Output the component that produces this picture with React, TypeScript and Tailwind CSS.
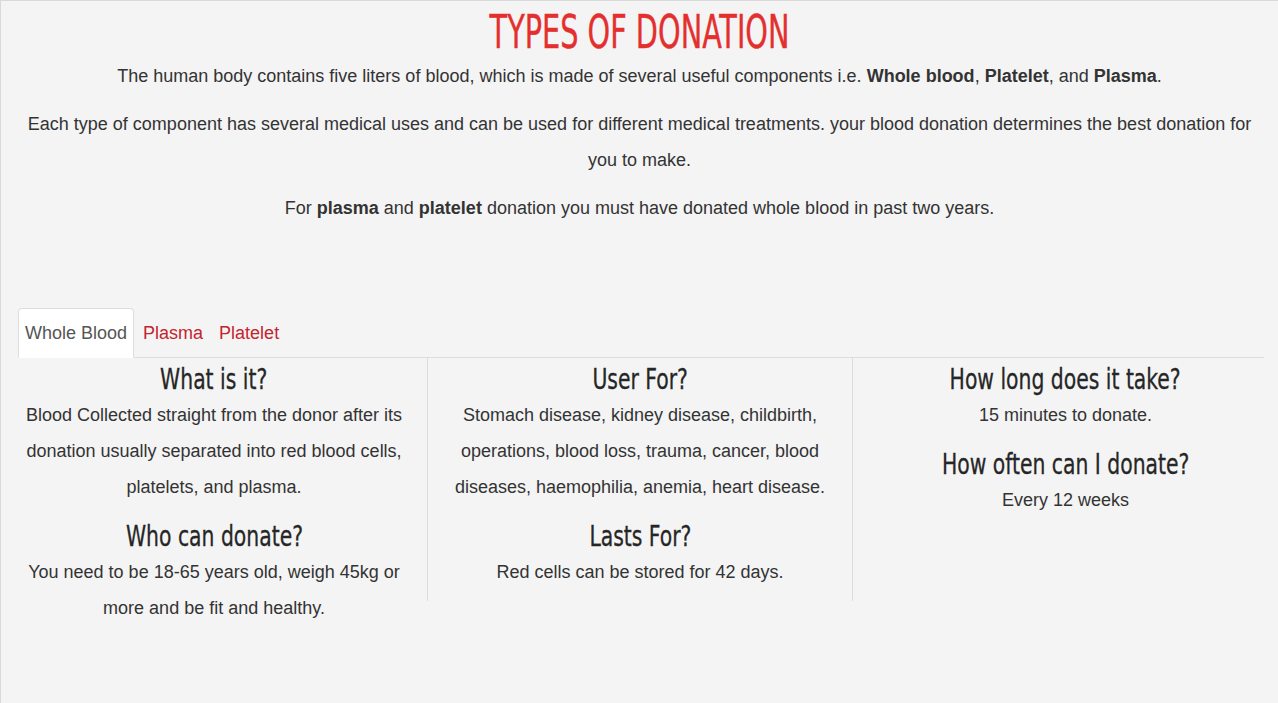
import React from "react";

const body = { fontFamily: '"Liberation Sans", Arial, sans-serif' };
const cond = { fontFamily: '"DejaVu Sans Condensed", "DejaVu Sans", sans-serif' };

function H({ children }: { children: React.ReactNode }) {
  return (
    <h3 className="text-[29px] leading-[36px] text-[#262626] font-normal text-center whitespace-nowrap" style={cond}>
      <span className="inline-block scale-x-[0.78] [-webkit-text-stroke:0.3px_#262626]">{children}</span>
    </h3>
  );
}

function P({ children }: { children: React.ReactNode }) {
  return <p className="text-[18px] leading-[36px] text-[#333] text-center mb-3">{children}</p>;
}

function CP({ children }: { children: React.ReactNode }) {
  return <p className="text-[18px] leading-[36px] text-[#333] text-center mb-[13px]">{children}</p>;
}

export default function App() {
  return (
    <div className="w-[1278px] h-[703px] overflow-hidden bg-[#f4f4f4] border-t border-l border-[#d9d9d9]" style={body}>
      <div className="pt-[4px] text-center">
        <h1 className="text-[47px] leading-[53px] text-[#e3302f] font-normal whitespace-nowrap" style={cond}>
          <span className="inline-block scale-x-[0.68] [-webkit-text-stroke:0.4px_#e3302f]">TYPES OF DONATION</span>
        </h1>
        <P>
          The human body contains five liters of blood, which is made of several useful components i.e.{" "}
          <b>Whole blood</b>, <b>Platelet</b>, and <b>Plasma</b>.
        </P>
        <P>
          Each type of component has several medical uses and can be used for different medical treatments. your
          blood donation determines the best donation for <br />you to make.
        </P>
        <P>
          For <b>plasma</b> and <b>platelet</b> donation you must have donated whole blood in past two years.
        </P>
      </div>

      <div className="mt-[82px] ml-[17px] mr-[14px] flex border-b border-[#dddddd]">
        <div className="-mb-px mr-[2px] px-[6px] pt-[6px] pb-[6px] leading-[36px] text-[18px] text-[#555] bg-white border border-[#dddddd] border-b-white rounded-t-[4px]">
          Whole Blood
        </div>
        <div className="-mb-px mr-[2px] px-[6px] pt-[6px] pb-[6px] leading-[36px] text-[18px] text-[#c4242e] border border-transparent">
          Plasma
        </div>
        <div className="-mb-px mr-[2px] px-[6px] pt-[6px] pb-[6px] leading-[36px] text-[18px] text-[#c4242e] border border-transparent">
          Platelet
        </div>
      </div>

      <div className="grid grid-cols-[426px_426px_1fr] items-start">
        <div className="pt-[3px] px-[8px]">
          <H>What is it?</H>
          <CP>
            Blood Collected straight from the donor after its donation usually separated into red blood cells,
            platelets, and plasma.
          </CP>
          <H>Who can donate?</H>
          <CP>You need to be 18-65 years old, weigh 45kg or more and be fit and healthy.</CP>
        </div>
        <div className="pt-[3px] px-[8px] border-l border-r border-[#dddddd]">
          <H>User For?</H>
          <CP>
            Stomach disease, kidney disease, childbirth, operations, blood loss, trauma, cancer, blood diseases,
            haemophilia, anemia, heart disease.
          </CP>
          <H>Lasts For?</H>
          <p className="text-[18px] leading-[36px] text-[#333] text-center mb-[11px]">Red cells can be stored for 42 days.</p>
        </div>
        <div className="pt-[3px] px-[8px]">
          <H>How long does it take?</H>
          <CP>15 minutes to donate.</CP>
          <H>How often can I donate?</H>
          <CP>Every 12 weeks</CP>
        </div>
      </div>
    </div>
  );
}
